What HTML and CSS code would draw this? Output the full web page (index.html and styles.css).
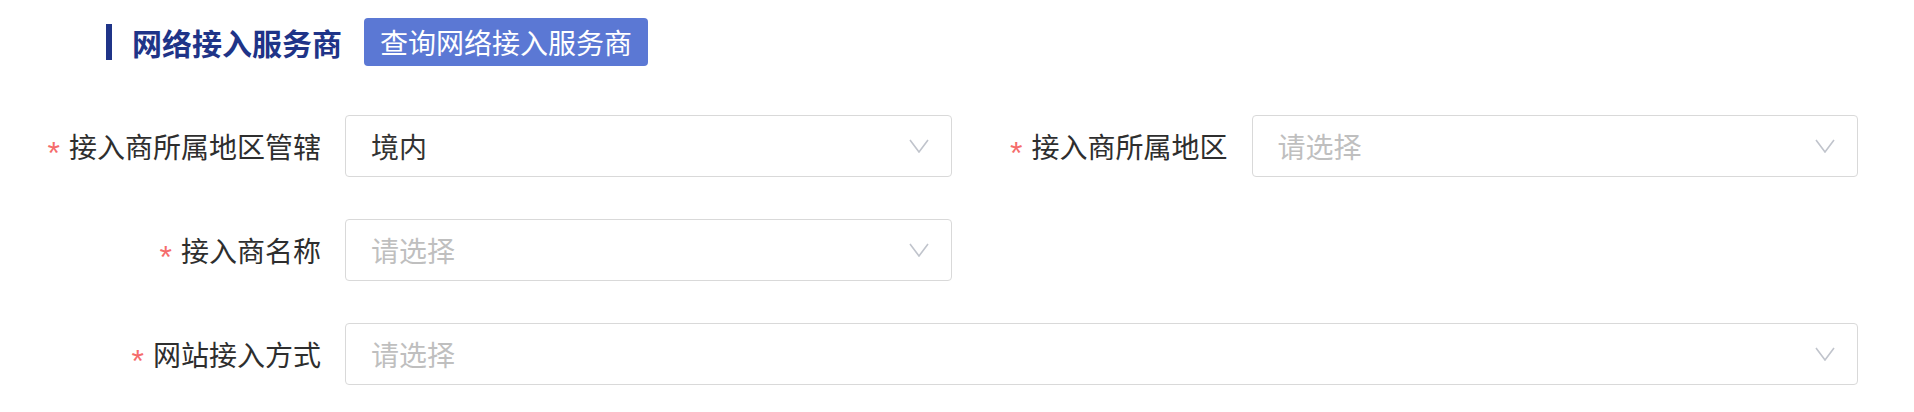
FILE: index.html
```html
<!DOCTYPE html>
<html lang="zh-CN">
<head>
<meta charset="utf-8">
<title>网络接入服务商</title>
<link rel="stylesheet" href="styles.css">
</head>
<body>
<div class="page">
  <div class="header">
    <span class="bar"></span>
    <h2 class="title">网络接入服务商</h2>
    <button class="btn" type="button">查询网络接入服务商</button>
  </div>
  <div class="form">
    <div class="item col1">
      <label class="label"><span class="req">*</span>接入商所属地区管辖</label>
      <div class="select">
        <span class="value">境内</span>
        <svg class="arrow" width="20" height="14" viewBox="0 0 20 14"><path d="M1 1 L10 13 L19 1" fill="none" stroke="#c0c4cc" stroke-width="1.6"/></svg>
      </div>
    </div>
    <div class="item col2">
      <label class="label"><span class="req">*</span>接入商所属地区</label>
      <div class="select">
        <span class="placeholder">请选择</span>
        <svg class="arrow" width="20" height="14" viewBox="0 0 20 14"><path d="M1 1 L10 13 L19 1" fill="none" stroke="#c0c4cc" stroke-width="1.6"/></svg>
      </div>
    </div>
    <div class="item col1">
      <label class="label"><span class="req">*</span>接入商名称</label>
      <div class="select">
        <span class="placeholder">请选择</span>
        <svg class="arrow" width="20" height="14" viewBox="0 0 20 14"><path d="M1 1 L10 13 L19 1" fill="none" stroke="#c0c4cc" stroke-width="1.6"/></svg>
      </div>
    </div>
    <div class="item full">
      <label class="label"><span class="req">*</span>网站接入方式</label>
      <div class="select">
        <span class="placeholder">请选择</span>
        <svg class="arrow" width="20" height="14" viewBox="0 0 20 14"><path d="M1 1 L10 13 L19 1" fill="none" stroke="#c0c4cc" stroke-width="1.6"/></svg>
      </div>
    </div>
  </div>
</div>
</body>
</html>
```
FILE: styles.css
```css
* { box-sizing: border-box; }
html, body {
  margin: 0;
  padding: 0;
  background: #ffffff;
}
body {
  font-family: "Noto Sans CJK SC", "Noto Sans", "Liberation Sans", sans-serif;
  color: #333333;
}
.page {
  width: 1914px;
}
.header {
  display: flex;
  align-items: center;
  padding: 18px 0 0 106px;
  height: 66px;
}
.bar {
  width: 6px;
  height: 36px;
  background: #1f3488;
  margin-right: 20px;
  flex: none;
}
.title {
  margin: 0;
  font-size: 30px;
  line-height: 40px;
  font-weight: 700;
  color: #1f3488;
}
.btn {
  margin-left: 22px;
  height: 48px;
  padding: 0 16px;
  border: none;
  border-radius: 4px;
  background: #5b78d4;
  color: #ffffff;
  font-family: inherit;
  font-size: 28px;
  line-height: 48px;
}
.form {
  margin-top: 49px;
  padding: 0 56px 0 45px;
  display: grid;
  grid-template-columns: 1fr 1fr;
  row-gap: 42px;
}
.item {
  display: flex;
  align-items: center;
  height: 62px;
}
.col1 { grid-column: 1; }
.col2 { grid-column: 2; }
.full { grid-column: 1 / -1; }
.label {
  width: 300px;
  flex: none;
  display: block;
  text-align: right;
  padding-right: 24px;
  font-size: 28px;
  line-height: 40px;
  color: #2e2e2e;
  white-space: nowrap;
}
.req {
  font-family: "Liberation Sans", sans-serif;
  color: #f56c6c;
  margin-right: 9px;
  font-size: 32px;
  position: relative;
  top: 6px;
}
.select {
  flex: 1;
  height: 62px;
  border: 1px solid #d9d9d9;
  border-radius: 4px;
  display: flex;
  align-items: center;
  justify-content: space-between;
  padding: 0 22px 0 25px;
  font-size: 28px;
  line-height: 40px;
}
.value { color: #333333; }
.placeholder { color: #bfbfbf; }
.arrow { flex: none; display: block; }
```
